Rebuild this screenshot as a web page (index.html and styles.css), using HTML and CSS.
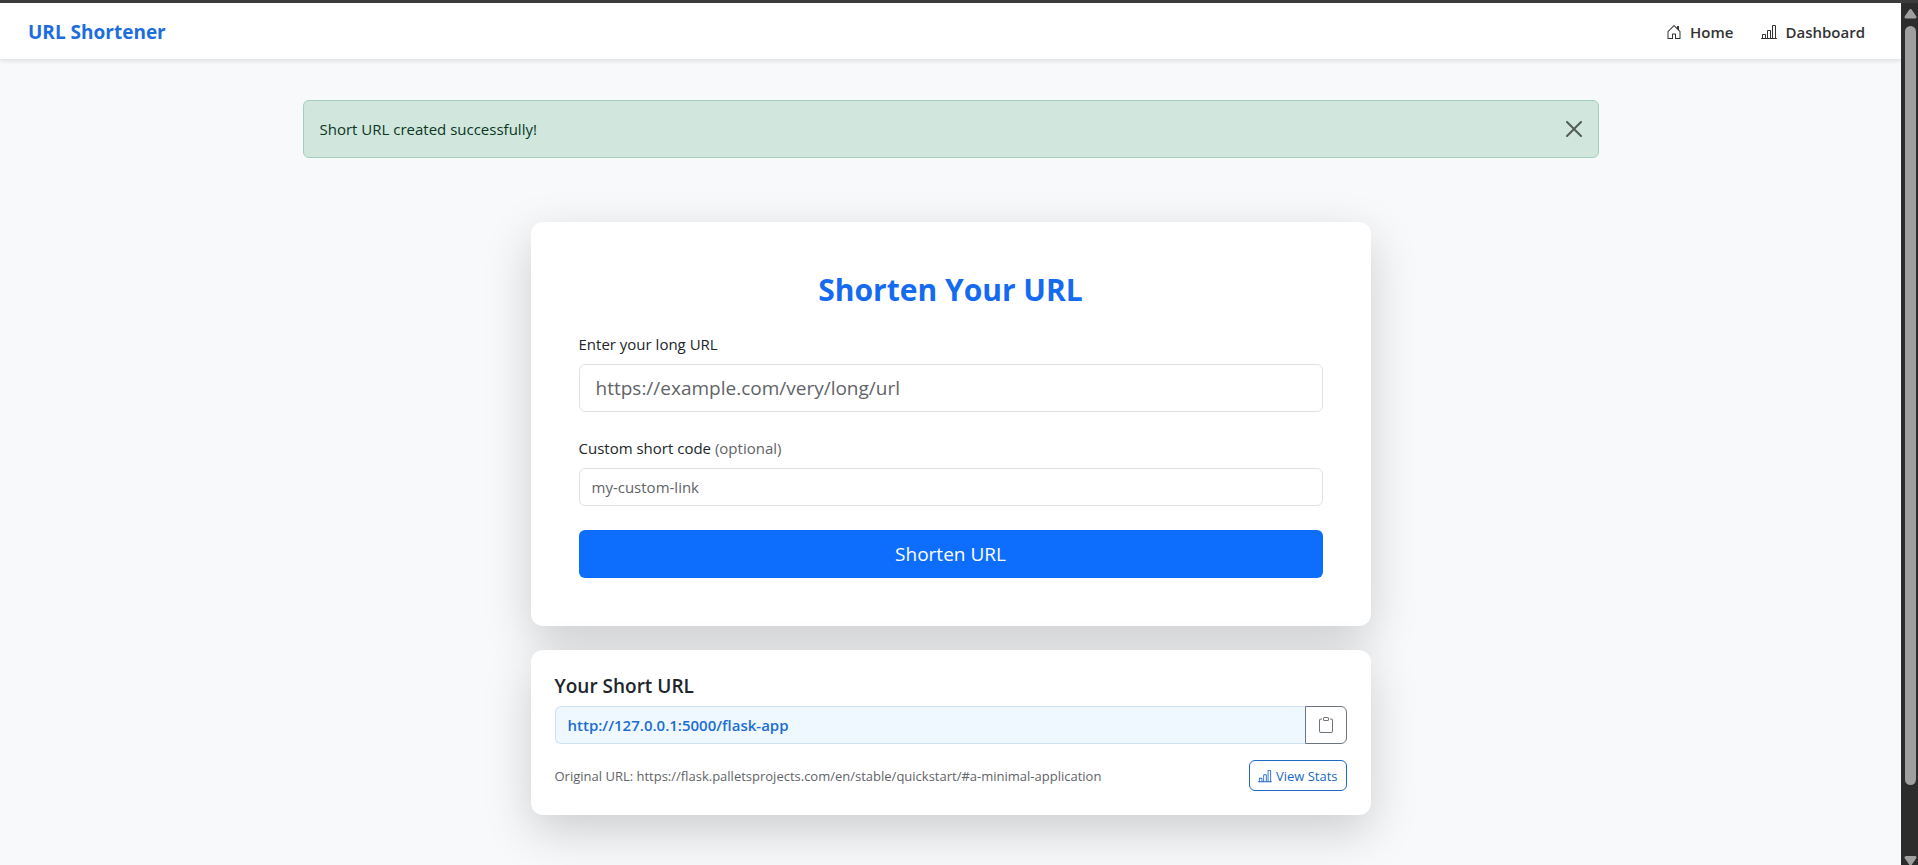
FILE: index.html
```html
<!DOCTYPE html>
<html lang="en">
<head>
<meta charset="utf-8">
<title>URL Shortener</title>
<link rel="stylesheet" href="styles.css">
</head>
<body>
<svg class="sprite" aria-hidden="true">
  <symbol id="house" viewBox="0 0 16 16"><path d="M8.354 1.146a.5.5 0 0 0-.708 0l-6 6A.5.5 0 0 0 1.5 7.5v7a.5.5 0 0 0 .5.5h4.5a.5.5 0 0 0 .5-.5v-4h2v4a.5.5 0 0 0 .5.5H14a.5.5 0 0 0 .5-.5v-7a.5.5 0 0 0-.146-.354L13 5.793V2.5a.5.5 0 0 0-.5-.5h-1a.5.5 0 0 0-.5.5v1.293L8.354 1.146zM2.5 14V7.707l5.5-5.5 5.5 5.5V14H10v-4a.5.5 0 0 0-.5-.5h-3a.5.5 0 0 0-.5.5v4H2.5z"/></symbol>
  <symbol id="chart" viewBox="0 0 16 16"><path d="M11 2a1 1 0 0 1 1-1h2a1 1 0 0 1 1 1v12h.5a.5.5 0 0 1 0 1H.5a.5.5 0 0 1 0-1H1v-3a1 1 0 0 1 1-1h2a1 1 0 0 1 1 1v3h1V7a1 1 0 0 1 1-1h2a1 1 0 0 1 1 1v7h1V2zm1 12h2V2h-2v12zm-3 0V7H7v7h2zm-5 0v-3H2v3h2z"/></symbol>
  <symbol id="clipboard" viewBox="0 0 16 16"><path d="M4 1.500H3a2 2 0 0 0-2 2V14a2 2 0 0 0 2 2h10a2 2 0 0 0 2-2V3.500a2 2 0 0 0-2-2h-1v1h1a1 1 0 0 1 1 1V14a1 1 0 0 1-1 1H3a1 1 0 0 1-1-1V3.500a1 1 0 0 1 1-1h1v-1z"/><path d="M9.500 1a.5.5 0 0 1 .5.5v1a.5.5 0 0 1-.5.5h-3a.5.5 0 0 1-.5-.5v-1a.5.5 0 0 1 .5-.5h3zm-3-1A1.500 1.500 0 0 0 5 1.500v1A1.500 1.500 0 0 0 6.500 4h3A1.500 1.500 0 0 0 11 2.500v-1A1.500 1.500 0 0 0 9.500 0h-3z"/></symbol>
  <symbol id="close" viewBox="0 0 16 16"><path d="M.293.293a1 1 0 0 1 1.414 0L8 6.586 14.293.293a1 1 0 1 1 1.414 1.414L9.414 8l6.293 6.293a1 1 0 0 1-1.414 1.414L8 9.414l-6.293 6.293a1 1 0 0 1-1.414-1.414L6.586 8 .293 1.707a1 1 0 0 1 0-1.414z"/></symbol>
</svg>
<div class="window">
  <div class="page">
    <header class="navbar">
      <a class="brand" href="#">URL Shortener</a>
      <nav class="nav">
        <a class="nav-link" href="#"><svg class="icon"><use href="#house"/></svg>Home</a>
        <a class="nav-link" href="#"><svg class="icon"><use href="#chart"/></svg>Dashboard</a>
      </nav>
    </header>
    <main class="container">
      <div class="alert" role="alert">
        <span>Short URL created successfully!</span>
        <button class="alert-close" type="button" aria-label="Close"><svg class="icon"><use href="#close"/></svg></button>
      </div>
      <div class="column">
        <section class="card card-form">
          <h1 class="title">Shorten Your URL</h1>
          <form class="form">
            <div class="field">
              <label for="long-url">Enter your long URL</label>
              <input class="input input-lg" id="long-url" type="url" placeholder="https://example.com/very/long/url">
            </div>
            <div class="field">
              <label for="code">Custom short code <span class="muted">(optional)</span></label>
              <input class="input" id="code" type="text" placeholder="my-custom-link">
            </div>
            <button class="submit" type="submit">Shorten URL</button>
          </form>
        </section>
        <section class="card card-result">
          <h2 class="subtitle"><label for="short-url">Your Short URL</label></h2>
          <div class="copy-group">
            <input class="input short-url" id="short-url" type="text" value="http://127.0.0.1:5000/flask-app" readonly>
            <button class="copy" type="button" aria-label="Copy"><svg class="icon"><use href="#clipboard"/></svg></button>
          </div>
          <div class="result-foot">
            <span class="muted">Original URL: https://flask.palletsprojects.com/en/stable/quickstart/#a-minimal-application</span>
            <a class="stats" href="#"><svg class="icon"><use href="#chart"/></svg>View Stats</a>
          </div>
        </section>
      </div>
    </main>
  </div>
  <div class="scrollbar" aria-hidden="true">
    <svg class="arrow" viewBox="0 0 15 23"><path d="M7.500 7.500 12 14H3z"/></svg>
    <div class="track"><div class="thumb"></div></div>
    <svg class="arrow" viewBox="0 0 15 23"><path d="M7.500 22 12 15.500H3z"/></svg>
  </div>
</div>
</body>
</html>
```
FILE: styles.css
```css
* { box-sizing: border-box; }

body {
  margin: 0;
  font: 15px/24px "Segoe UI", "Open Sans", "Noto Sans", sans-serif;
  color: #212529;
  background: #f8f9fa;
}

h1, h2 { margin: 0; }
a { text-decoration: none; }
input, button { font: inherit; }
button { cursor: pointer; }

.sprite { position: absolute; width: 0; height: 0; }
.icon { width: 16px; height: 16px; flex: none; fill: currentColor; }
.muted { color: #5f6468; }

.window {
  display: flex;
  height: 100vh;
  border-top: 3px solid #3b3b3b;
  overflow: hidden;
}

.page { flex: 1; min-width: 0; background: #f8f9fb; overflow: hidden; }

.navbar {
  display: flex;
  align-items: center;
  justify-content: space-between;
  padding: 9px 28px 7px;
  background: #fff;
  box-shadow: 0 2px 4px rgba(0, 0, 0, .1);
}

.brand { font-size: 19px; font-weight: 700; color: #1c6ddd; }
.nav { display: flex; gap: 12px; }

.nav-link {
  display: flex;
  align-items: center;
  gap: 8px;
  padding: 8px;
  font-weight: 600;
  color: #333;
}

.container {
  display: flex;
  flex-direction: column;
  gap: 64px;
  max-width: 1320px;
  margin: 0 auto;
  padding: 41px 12px 48px;
}

.alert {
  display: flex;
  align-items: center;
  justify-content: space-between;
  padding: 16px;
  border: 1px solid #a3cfbb;
  border-radius: 6px;
  background: #d1e7dd;
  color: #0a3622;
}

.alert-close {
  display: flex;
  padding: 0;
  border: 0;
  background: none;
  color: #000;
  opacity: .6;
}

.column {
  display: flex;
  flex-direction: column;
  gap: 24px;
  width: 100%;
  max-width: 840px;
  margin: 0 auto;
}

.card {
  border-radius: 12px;
  background: #fff;
  box-shadow: 0 16px 48px rgba(0, 0, 0, .175);
}

.card-form { padding: 48px; }
.card-result { padding: 24px; }

.title {
  margin-bottom: 22px;
  font-size: 30px;
  line-height: 40px;
  font-weight: 700;
  text-align: center;
  color: #146bf0;
}

.form { display: flex; flex-direction: column; gap: 24px; }
.field { display: flex; flex-direction: column; gap: 8px; }

.input {
  width: 100%;
  height: 38px;
  padding: 6px 12px;
  border: 1px solid #dee2e6;
  border-radius: 6px;
  background: #fff;
  color: #212529;
}

.input::placeholder { color: #5f6468; opacity: 1; }
.input-lg { height: 48px; padding: 8px 16px; font-size: 19px; }

.submit {
  height: 48px;
  border: 0;
  border-radius: 6px;
  background: #0d6efd;
  font-size: 19px;
  color: #fff;
}

.subtitle { margin-bottom: 8px; font-size: 19px; line-height: 24px; font-weight: 600; }
.copy-group { display: flex; margin-bottom: 16px; }

.short-url {
  flex: 1;
  min-width: 0;
  border-color: #cfe2f3;
  border-right: 0;
  border-radius: 6px 0 0 6px;
  background: #f0f8ff;
  font-weight: 600;
  color: #1c6dd0;
}

.copy {
  display: flex;
  align-items: center;
  padding: 0 12px;
  border: 1px solid #6c757d;
  border-radius: 0 6px 6px 0;
  background: #fff;
  color: #6c757d;
}

.result-foot { display: flex; align-items: center; justify-content: space-between; gap: 16px; font-size: 13px; }

.stats {
  display: flex;
  align-items: center;
  gap: 4px;
  height: 31px;
  padding: 0 8px;
  border: 1px solid #2069c4;
  border-radius: 6px;
  color: #2069c4;
}

.stats .icon { width: 14px; height: 14px; }

.scrollbar { display: flex; flex-direction: column; width: 17px; padding-left: 2px; background: #2c2c2c; }
.arrow { width: 15px; height: 23px; flex: none; fill: #9f9f9f; stroke: #9f9f9f; stroke-width: 3; stroke-linejoin: round; }
.track { flex: 1; }
.thumb { width: 11px; height: 93%; margin: 0 auto; border-radius: 6px; background: #9f9f9f; }
```
